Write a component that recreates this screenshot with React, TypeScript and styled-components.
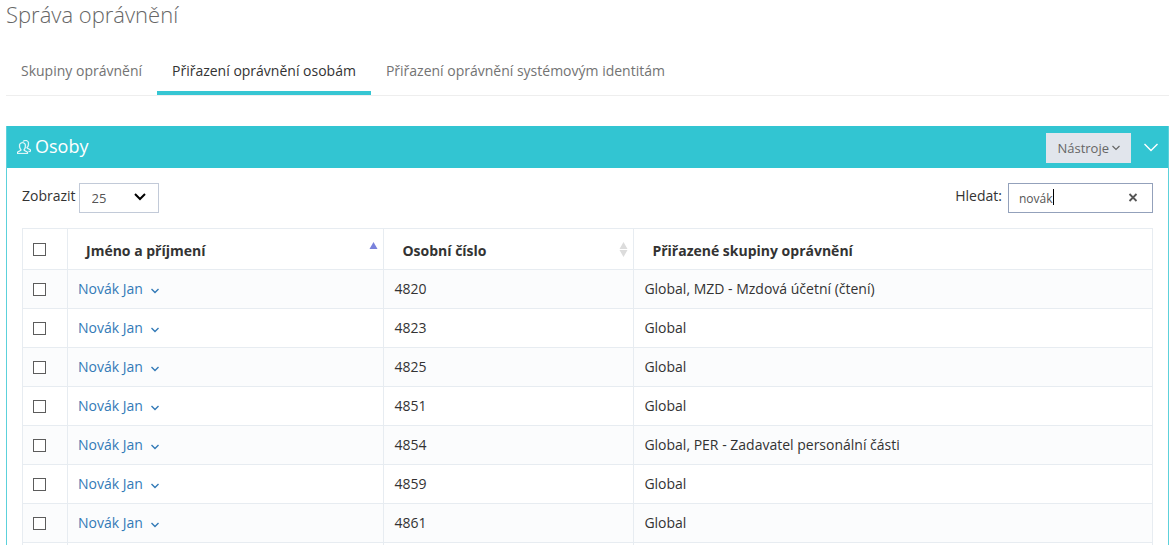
import React, { useState } from "react";
import styled, { createGlobalStyle } from "styled-components";
import { SlPeople } from "react-icons/sl";

const GlobalStyle = createGlobalStyle`
  *, *::before, *::after { box-sizing: border-box; }
  body {
    margin: 0;
    background: #fff;
    color: #333;
    font: 14px/20px "Open Sans", "Noto Sans", sans-serif;
  }
  button, input, select { font-family: inherit; }
`;

const Page = styled.main`
  height: 100vh;
  overflow: hidden;
  padding: 0 7px 0 6px;
`;

const Title = styled.h1`
  margin: 0;
  color: #666;
  font-size: 22px;
  font-weight: 300;
  line-height: 28px;
`;

const Tabs = styled.nav`
  display: flex;
  height: 49px;
  margin: 19px 0 30px;
  border-bottom: 1px solid #eee;
`;

const Tab = styled.a<{ $active?: boolean }>`
  padding: 14px 15px 0;
  border-bottom: 4px solid ${(p) => (p.$active ? "#36c6d3" : "transparent")};
  color: ${(p) => (p.$active ? "#333" : "#737373")};
  text-decoration: none;
`;

const Panel = styled.section`
  border: 1px solid #5cd1db;
  border-top: 0;
`;

const PanelHeader = styled.header`
  display: flex;
  align-items: center;
  height: 42px;
  padding: 0 10px;
  background: #32c5d2;
  color: #fff;
`;

const PanelTitle = styled.h2`
  flex: 1;
  display: flex;
  align-items: center;
  gap: 4px;
  margin: 0;
  padding-bottom: 2px;
  font-size: 18px;
  font-weight: 400;
  line-height: 24px;
`;

const TitleIcon = styled(SlPeople)`
  margin-top: 2px;
  stroke: currentColor;
  stroke-width: 20;
`;

const ToolsButton = styled.button`
  display: flex;
  align-items: center;
  gap: 3px;
  height: 30px;
  margin-top: 2px;
  padding: 0 11px;
  border: 0;
  background: #e1e5ec;
  color: #666;
  font-size: 13px;
`;

const IconButton = styled.button`
  display: flex;
  padding: 0;
  border: 0;
  background: none;
  color: inherit;
`;

const CollapseButton = styled(IconButton)`
  margin-left: 13px;
`;

const PanelBody = styled.div`
  padding: 15px;
`;

const Toolbar = styled.div`
  display: flex;
  justify-content: space-between;
  margin-bottom: 15px;
`;

const Field = styled.div`
  display: flex;
  gap: 3px;
`;

const FieldLabel = styled.label`
  line-height: 26px;
`;

const SelectBox = styled.div`
  position: relative;
`;

const Select = styled.select`
  appearance: none;
  width: 80px;
  height: 30px;
  padding: 0 12px;
  border: 1px solid #c2cad8;
  border-radius: 0;
  background: #fff;
  color: #555;
  font-size: 13px;
`;

const SelectArrow = styled.svg`
  position: absolute;
  top: 10px;
  right: 13px;
  pointer-events: none;
`;

const SearchBox = styled.div`
  position: relative;
  display: flex;
  align-items: center;
  width: 145px;
  height: 30px;
  margin-left: 3px;
  padding: 0 14px 0 10px;
  border: 1px solid #93a1bb;
`;

const SearchInput = styled.input`
  flex: 1;
  min-width: 0;
  height: 28px;
  padding: 0;
  border: 0;
  outline: 0;
  background: none;
  color: #555;
  caret-color: transparent;
  font-size: 12px;
`;

const Caret = styled.span`
  position: absolute;
  top: 5px;
  left: 44px;
  width: 1px;
  height: 16px;
  background: #000;
`;

const Table = styled.table`
  width: 100%;
  border-collapse: collapse;
  table-layout: fixed;

  th, td { border: 1px solid #e7ecf1; text-align: left; }
  tbody tr:nth-child(odd) { background: #fbfcfd; }
`;

const CheckColumn = styled.col`
  width: 45px;
`;

const NameColumn = styled.col`
  width: 28%;
`;

const NumberColumn = styled.col`
  width: 250px;
`;

const HeadCell = styled.th`
  height: 41px;
  padding: 4px 18px 0;
  font-weight: 700;
`;

const HeadContent = styled.div`
  display: flex;
  justify-content: space-between;
  align-items: center;
  margin-right: -13px;
`;

const Cell = styled.td`
  height: 39px;
  padding: 0 10px;
`;

const CheckCell = styled(Cell)`
  line-height: 0;
`;

const Checkbox = styled.input`
  appearance: none;
  width: 13px;
  height: 13px;
  margin: 0;
  border: 1px solid #5c5c5c;
  background: #fff;

  &:checked { background: #32c5d2; }
`;

const PersonLink = styled.a`
  display: inline-flex;
  align-items: center;
  gap: 8px;
  color: #337ab7;
  text-decoration: none;
`;

const RowArrow = styled.svg`
  margin-top: 4px;
`;

type Person = { name: string; number: string; groups: string };

const people: Person[] = [
  { name: "Novák Jan", number: "4820", groups: "Global, MZD - Mzdová účetní (čtení)" },
  { name: "Novák Jan", number: "4823", groups: "Global" },
  { name: "Novák Jan", number: "4825", groups: "Global" },
  { name: "Novák Jan", number: "4851", groups: "Global" },
  { name: "Novák Jan", number: "4854", groups: "Global, PER - Zadavatel personální části" },
  { name: "Novák Jan", number: "4859", groups: "Global" },
  { name: "Novák Jan", number: "4861", groups: "Global" },
];

export default function App() {
  const [query, setQuery] = useState("novák");
  return (
    <Page>
      <GlobalStyle />
      <Title>Správa oprávnění</Title>
      <Tabs>
        <Tab href="#skupiny">Skupiny oprávnění</Tab>
        <Tab href="#osoby" $active>Přiřazení oprávnění osobám</Tab>
        <Tab href="#identity">Přiřazení oprávnění systémovým identitám</Tab>
      </Tabs>
      <Panel>
        <PanelHeader>
          <PanelTitle>
            <TitleIcon size={14} />
            Osoby
          </PanelTitle>
          <ToolsButton type="button">
            Nástroje
            <svg width="8" height="6" viewBox="0 0 8 6" fill="none" stroke="currentColor">
              <path d="M0.5 1L4 4.5L7.5 1" strokeWidth="1.2" />
            </svg>
          </ToolsButton>
          <CollapseButton type="button" aria-label="Sbalit">
            <svg width="14" height="9" viewBox="0 0 14 9" fill="none" stroke="currentColor">
              <path d="M0.5 1L7 7.5L13.5 1" strokeWidth="1.4" />
            </svg>
          </CollapseButton>
        </PanelHeader>
        <PanelBody>
          <Toolbar>
            <Field>
              <FieldLabel htmlFor="length">Zobrazit</FieldLabel>
              <SelectBox>
                <Select id="length" defaultValue="25">
                  <option value="25">25</option>
                </Select>
                <SelectArrow width="12" height="9" viewBox="0 0 12 9" fill="none" stroke="#000">
                  <path d="M1 1L6 6L11 1" strokeWidth="2" />
                </SelectArrow>
              </SelectBox>
            </Field>
            <Field>
              <FieldLabel htmlFor="search">Hledat:</FieldLabel>
              <SearchBox>
                <SearchInput id="search" type="text" value={query} onChange={(e) => setQuery(e.target.value)} />
                <Caret />
                <IconButton type="button" aria-label="Vymazat" onClick={() => setQuery("")}>
                  <svg width="10" height="10" viewBox="0 0 10 10" fill="none" stroke="#555">
                    <path d="M1.5 1L8.5 8M8.5 1L1.5 8" strokeWidth="1.8" />
                  </svg>
                </IconButton>
              </SearchBox>
            </Field>
          </Toolbar>
          <Table>
            <colgroup>
              <CheckColumn />
              <NameColumn />
              <NumberColumn />
              <col />
            </colgroup>
            <thead>
              <tr>
                <CheckCell as="th" scope="col">
                  <Checkbox type="checkbox" aria-label="Vybrat vše" />
                </CheckCell>
                <HeadCell scope="col" aria-sort="ascending">
                  <HeadContent>
                    Jméno a příjmení
                    <svg width="9" height="20" viewBox="0 0 9 20">
                      <path d="M0.5 8L4.5 1L8.5 8Z" fill="#7a82dc" />
                    </svg>
                  </HeadContent>
                </HeadCell>
                <HeadCell scope="col">
                  <HeadContent>
                    Osobní číslo
                    <svg width="9" height="20" viewBox="0 0 9 20" fill="#dcdcdc">
                      <path d="M0.5 8L4.5 1L8.5 8ZM0.5 9L4.5 16L8.5 9Z" />
                    </svg>
                  </HeadContent>
                </HeadCell>
                <HeadCell scope="col">Přiřazené skupiny oprávnění</HeadCell>
              </tr>
            </thead>
            <tbody>
              {people.map((p) => (
                <tr key={p.number}>
                  <CheckCell>
                    <Checkbox type="checkbox" aria-label={`${p.name} ${p.number}`} />
                  </CheckCell>
                  <Cell>
                    <PersonLink href={`#${p.number}`}>
                      {p.name}
                      <RowArrow width="8" height="6" viewBox="0 0 8 6" fill="none" stroke="currentColor">
                        <path d="M0.5 1L4 4.5L7.5 1" strokeWidth="1.4" />
                      </RowArrow>
                    </PersonLink>
                  </Cell>
                  <Cell>{p.number}</Cell>
                  <Cell>{p.groups}</Cell>
                </tr>
              ))}
              <tr>
                <Cell />
                <Cell />
                <Cell />
                <Cell />
              </tr>
            </tbody>
          </Table>
        </PanelBody>
      </Panel>
    </Page>
  );
}
